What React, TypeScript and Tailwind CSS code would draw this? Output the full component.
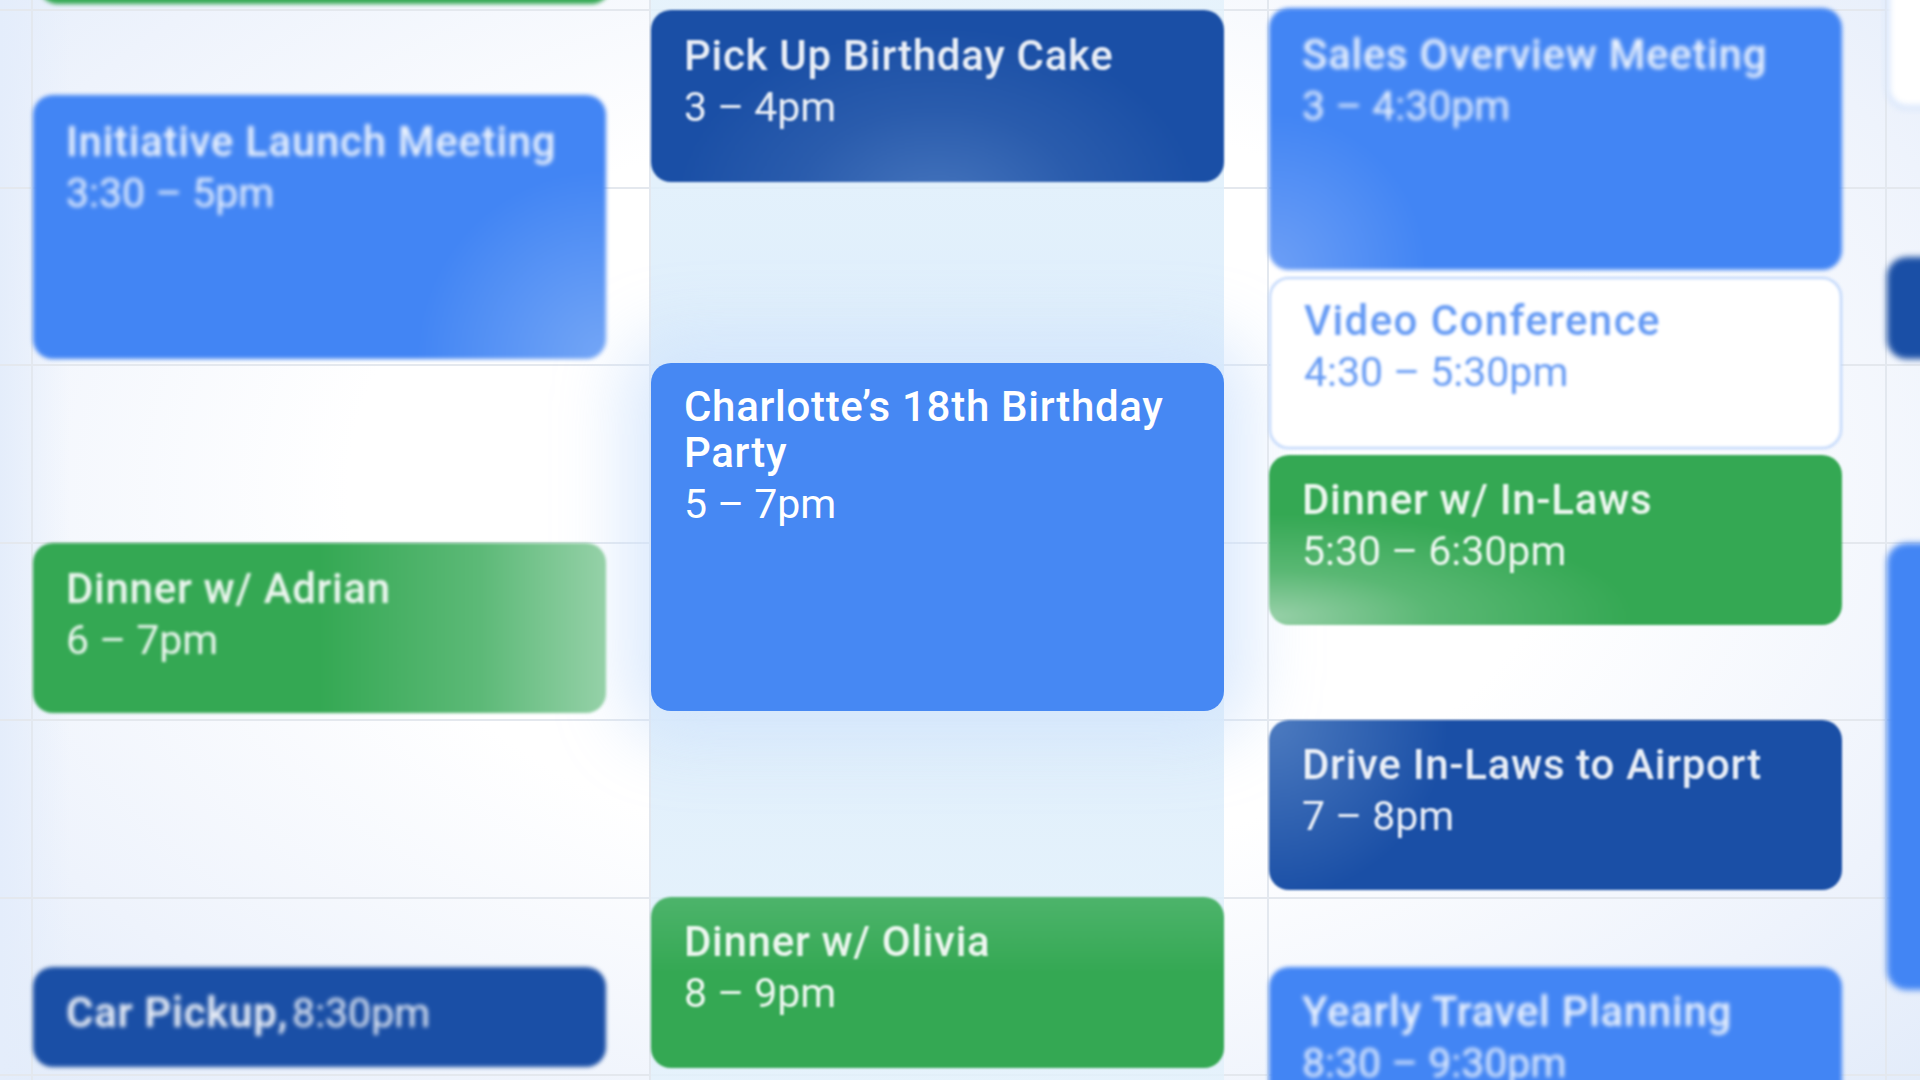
import React from "react";

type Tone = "blue" | "navy" | "green" | "outline";

type CalEvent = {
  title?: string;
  time?: string;
  inline?: boolean;
  tone: Tone;
  box: string;
  look?: string;
};

const tones: Record<Tone, string> = {
  blue: "bg-[#4285f4] text-white",
  navy: "bg-[#1a4fa6] text-white",
  green: "bg-[#34a853] text-white",
  outline: "bg-white border-2 border-[#b4cffa] text-[#5590f3]",
};

const columns: { tint?: boolean; events: CalEvent[] }[] = [
  {
    events: [
      { tone: "green", box: "-mt-[96px] h-[100px] ml-[5px] w-[563px]", look: "blur-[2px]" },
      {
        title: "Initiative Launch Meeting",
        time: "3:30 – 5pm",
        tone: "blue",
        box: "mt-[91px] h-[264px] pt-[24px]",
        look: "blur-[2px] bg-[radial-gradient(circle_at_100%_100%,#74a6f6_0%,#4285f4_30%)]",
      },
      {
        title: "Dinner w/ Adrian",
        time: "6 – 7pm",
        tone: "green",
        box: "mt-[184px] h-[170px] pt-[23px]",
        look: "blur-[1.5px] bg-[linear-gradient(to_right,#34a853_50%,#5cb977_78%,#95d1a8_100%)]",
      },
      {
        title: "Car Pickup,",
        time: "8:30pm",
        inline: true,
        tone: "navy",
        box: "mt-[254px] h-[100px]",
        look: "blur-[2px]",
      },
    ],
  },
  {
    tint: true,
    events: [
      {
        title: "Pick Up Birthday Cake",
        time: "3 – 4pm",
        tone: "navy",
        box: "mt-[10px] h-[172px] pt-[23px]",
        look: "blur-[1px] bg-[radial-gradient(ellipse_at_50%_115%,#4675bd_0%,#2a5cad_35%,#1a4fa6_65%)]",
      },
      {
        title: "Charlotte’s 18th Birthday Party",
        time: "5 – 7pm",
        tone: "blue",
        box: "mt-[181px] h-[348px] pt-[21px] shadow-[0_0_70px_25px_rgba(206,226,252,0.75)] bg-[#4688f3]",
      },
      {
        title: "Dinner w/ Olivia",
        time: "8 – 9pm",
        tone: "green",
        box: "mt-[186px] h-[171px] pt-[22px]",
        look: "blur-[1px] bg-[linear-gradient(to_bottom,#4db46b_0%,#34a853_45%)]",
      },
    ],
  },
  {
    events: [
      {
        title: "Sales Overview Meeting",
        time: "3 – 4:30pm",
        tone: "blue",
        box: "mt-[8px] h-[262px] pt-[24px]",
        look: "blur-[2px] bg-[radial-gradient(circle_at_0%_100%,#6d9ff6_0%,#4285f4_25%)]",
      },
      {
        title: "Video Conference",
        time: "4:30 – 5:30pm",
        tone: "outline",
        box: "mt-[7px] h-[172px] pt-[19px]",
        look: "blur-[1.5px] tracking-[1.4px]",
      },
      {
        title: "Dinner w/ In-Laws",
        time: "5:30 – 6:30pm",
        tone: "green",
        box: "mt-[6px] h-[170px] pt-[22px]",
        look: "blur-[1px] bg-[radial-gradient(ellipse_at_0%_95%,#97d0a8_0%,#5ab874_20%,#34a853_45%)]",
      },
      {
        title: "Drive In-Laws to Airport",
        time: "7 – 8pm",
        tone: "navy",
        box: "mt-[95px] h-[170px] pt-[22px]",
        look: "blur-[1px] bg-[radial-gradient(circle_at_0%_0%,#4d7bc0_0%,#1a4fa6_30%)]",
      },
      {
        title: "Yearly Travel Planning",
        time: "8:30 – 9:30pm",
        tone: "blue",
        box: "mt-[77px] h-[180px] pt-[22px]",
        look: "blur-[2px]",
      },
    ],
  },
  {
    events: [
      { tone: "outline", box: "-mt-[80px] h-[188px]", look: "blur-[3px]" },
      { tone: "navy", box: "mt-[149px] h-[102px]", look: "blur-[3px]" },
      { tone: "blue", box: "mt-[184px] h-[447px]", look: "blur-[3px]" },
    ],
  },
];

function EventCard({ ev }: { ev: CalEvent }) {
  const base = `shrink-0 w-[573px] rounded-[20px] ${tones[ev.tone]} ${ev.box} ${ev.look ?? ""}`;

  if (ev.inline) {
    return (
      <div className={`${base} flex items-center px-[33px]`}>
        <div className="whitespace-nowrap leading-[46px] opacity-90">
          <span className="text-[42px] font-semibold tracking-[0.7px]">{ev.title}</span>{" "}
          <span className="text-[41px]">{ev.time}</span>
        </div>
      </div>
    );
  }

  return (
    <div className={`${base} overflow-hidden px-[33px]`}>
      {ev.title && (
        <div
          className={`text-[42px] font-medium leading-[46px] ${
            ev.look ? "whitespace-nowrap opacity-90" : ""
          } ${ev.tone === "outline" ? "" : "tracking-[0.7px]"}`}
        >
          {ev.title}
        </div>
      )}
      {ev.time && (
        <div className={`mt-[5px] text-[41px] leading-[46px] tracking-normal ${ev.look ? "opacity-90" : ""}`}>
          {ev.time}
        </div>
      )}
    </div>
  );
}

export default function App() {
  return (
    <div className="h-[1080px] w-[1920px] overflow-hidden bg-[linear-gradient(to_right,#e4edfb_0px,rgba(255,255,255,0)_70px),radial-gradient(ellipse_at_50%_45%,#ffffff_45%,#eef3fc_80%,#e3ecfa_100%)] [font-family:Roboto,sans-serif]">
      <div className="flex h-full bg-[repeating-linear-gradient(to_bottom,#e4e8ee_0px,#e4e8ee_2px,transparent_2px,transparent_177.5px)] bg-[position:0_9px] pl-[31px]">
        {columns.map((col, i) => (
          <div key={i} className="flex w-[618px] shrink-0 border-l-2 border-[#e3e8ef]">
            <div
              className={`flex w-[573px] flex-col ${
                col.tint
                  ? "bg-[linear-gradient(to_bottom,rgba(226,241,251,0.8)_0%,rgba(220,237,251,0.9)_30%,rgba(222,238,251,0.9)_70%,rgba(226,241,251,0.8)_100%)]"
                  : ""
              }`}
            >
              {col.events.map((ev, j) => (
                <EventCard key={j} ev={ev} />
              ))}
            </div>
          </div>
        ))}
      </div>
    </div>
  );
}
